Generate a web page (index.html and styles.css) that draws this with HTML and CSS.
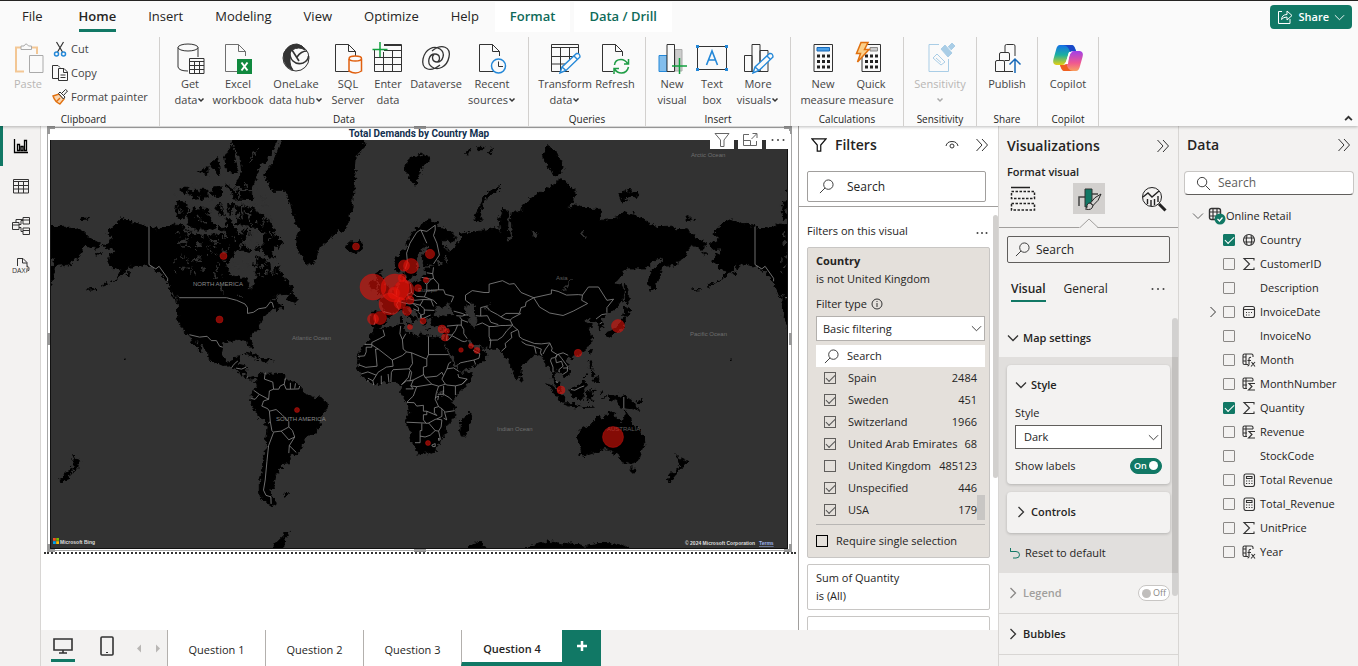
FILE: index.html
```html
<!DOCTYPE html>
<html lang="en">
<head>
<meta charset="utf-8">
<title>Online Retail report</title>
<link rel="stylesheet" href="styles.css">
</head>
<body>
<svg class="defs" aria-hidden="true">
  <symbol id="chev" viewBox="0 0 12 12"><path d="M1 3.5 6 8.5 11 3.5"/></symbol>
  <symbol id="caret" viewBox="0 0 8 8"><path d="M1.500 2.500 4 5 6.500 2.500" stroke-width="1.500"/></symbol>
  <symbol id="dbl" viewBox="0 0 14 14"><path d="M1.500 1 7 7 1.500 13M7 1 12.500 7 7 13"/></symbol>
  <symbol id="find" viewBox="0 0 16 16"><circle cx="10" cy="6" r="5"/><path d="M6.400 9.600 1 15"/></symbol>
  <symbol id="findr" viewBox="0 0 16 16"><circle cx="6.500" cy="6.500" r="5"/><path d="M10 10 15 15"/></symbol>
  <symbol id="funnel" viewBox="0 0 18 16"><path d="M1 1H17L11 8V15H7V8Z"/></symbol>
  <symbol id="page" viewBox="0 0 32 32"><path d="M19 29.500H3.500V2.500H16.500L23.500 9.500V14M16.500 2.500V9.500H23.500"/></symbol>
  <symbol id="grid" viewBox="0 0 32 32"><path d="M2.500 8V29.500H29.500V2.500H12M12 8.500H29.500M12 3.500H29.500M2.500 15.500H29.500M2.500 22.500H29.500M11.500 10V29M20.500 9V29"/></symbol>
  <symbol id="pencil" viewBox="0 0 32 32"><path d="M11 31 13 25 27.500 11.500Q31 11 31 15L17 28.500ZM25 14 28.500 17.500M13 25 17 28.500" fill="#fafafa" stroke="#2488d8" stroke-width="1.400"/></symbol>
  <symbol id="calc" viewBox="0 0 32 32"><path d="M7 2.500H25.500V29.500H7Z"/><path d="M10 12.500H13V15.500H10ZM15 12.500H18V15.500H15ZM20 12.500H23V15.500H20ZM10 18H13V21H10ZM15 18H18V21H15ZM20 18H23V21H20ZM10 23.500H13V26.500H10ZM15 23.500H18V26.500H15ZM20 23.500H23V26.500H20Z" fill="#222" stroke="none"/></symbol>
  <symbol id="sigma" viewBox="0 0 14 14"><path d="M12 3.500V1.500H2L7.500 7 2 12.500H12V10.500"/></symbol>
  <symbol id="globe" viewBox="0 0 14 14"><circle cx="7" cy="7" r="5.500"/><path d="M5 2Q3.500 7 5 12M9 2Q10.500 7 9 12M2 5H12M2 9H12"/></symbol>
  <symbol id="date" viewBox="0 0 14 14"><rect x="1.500" y="1.500" width="11" height="11" rx="2"/><path d="M1.500 4.500H12.500M4 7.500H5M6.500 7.500H7.500M9 7.500H10M4 10H5M6.500 10H7.500"/></symbol>
  <symbol id="fx" viewBox="0 0 14 14"><path d="M6 11.500H2.500Q1 11.500 1 10V2.500Q1 1 2.500 1H9.500Q11 1 11 2.500V4M4 1V11M1 4H4M1 8H4"/><path d="M9 4.500Q7 4 7 6V11.500Q7 13 5.500 13M5.500 7.500H9M9.500 9 13 13.500M13 9 9 13.500"/></symbol>
  <symbol id="sumcol" viewBox="0 0 14 14"><path d="M5 11.500H2.500Q1 11.500 1 10V2.500Q1 1 2.500 1H9.500Q11 1 11 2.500V4M4 1V11M1 4H11M1 8H5"/><path d="M13 6.500H7L10 9.500 6.500 13H13"/></symbol>
  <symbol id="measure" viewBox="0 0 14 14"><rect x="2" y="1" width="10.500" height="12.500" rx="2"/><path d="M4.500 3.500H10V5.500H4.500ZM4 8H5.200M6.700 8H7.900M9.300 8H10.500M4 10.500H5.200M6.700 10.500H7.900M9.300 10.500H10.500"/></symbol>
</svg>

<header class="ribbon">
  <nav class="tabs">
    <a href="#file">File</a><a href="#home" class="on">Home</a><a href="#insert">Insert</a><a href="#modeling">Modeling</a><a href="#view">View</a><a href="#optimize">Optimize</a><a href="#help">Help</a><a href="#format" class="ctx">Format</a><a href="#drill" class="ctx">Data / Drill</a>
    <button class="share"><svg viewBox="0 0 16 16"><path d="M5 2.500H1.500V14.500H13V10M4.500 10.500Q5 5.500 10 5.500V2L15 6.500 10 11V8Q6.500 8 4.500 10.500Z"/></svg>Share<svg class="s12"><use href="#chev"/></svg></button>
  </nav>
  <div class="tools">
    <section class="group clip">
      <div class="btns">
        <button class="big w40 off"><svg viewBox="0 0 32 32"><path d="M12 29.500H4V5.500H9M19 5.500H25V12" stroke="#f3c795" stroke-width="2"/><path d="M9 7.500V4H12Q14 0 16.500 4H19.500V7.500ZM17.500 13.500H31V30.500H17.500Z" stroke="#aaa"/></svg>Paste</button>
        <div class="stack">
          <button><svg viewBox="0 0 16 16"><path d="M4.500 1 10.500 11M11.500 1 5.500 11" stroke-width="1.200"/><g stroke="#2488d8" stroke-width="1.500"><circle cx="4.500" cy="13" r="2"/><circle cx="11.500" cy="13" r="2"/></g></svg>Cut</button>
          <button><svg viewBox="0 0 16 16"><path d="M6 13.500H.5V.5H6L8 2.500M6.500 3.500H12L15.500 7V15.500H6.500ZM11.500 4V7.500H15M8.500 10H13.500M8.500 12.500H13.500"/></svg>Copy</button>
          <button><svg viewBox="0 0 16 16"><path d="M1 7 7 5 12 10 8 15Q3 13 1 7ZM5 12 8 9" fill="#fbd5ae" stroke="#e0700f" stroke-width="1.400"/><path d="M6.500 4.500 8 3 13 8 11.500 10ZM9.500 4.500 13.500.5 15.500 2 11.500 6.500" fill="#fafafa"/></svg>Format painter</button>
        </div>
      </div>
      <h2>Clipboard</h2>
    </section>
    <section class="group pad8">
      <div class="btns">
        <button class="big w44"><svg viewBox="0 0 32 32"><ellipse cx="14" cy="5.500" rx="10" ry="3.500"/><path d="M4 5.500V25Q5 29 14 29M24 5.500V15"/><path d="M15.500 16.500H30V31.500H15.500ZM15.500 19.500H30M15.500 23.500H30M15.500 27.500H30M20.500 19V31M25.500 19V31" fill="#fafafa"/></svg>Get<br>data<i><svg><use href="#caret"/></svg></i></button>
        <button class="big w52"><svg viewBox="0 0 32 32"><use href="#page" opacity=".7"/><path d="M15 17H30V32H15Z" fill="#10893e" stroke="none"/><path d="M19.500 20.500 25.500 28.500M25.500 20.500 19.500 28.500" stroke="#fff" stroke-width="2"/></svg>Excel<br>workbook</button>
        <button class="big w64"><svg viewBox="0 0 32 32"><circle cx="16" cy="16" r="13"/><path d="M4 11Q8 2 17 2Q23 3 25 8Q19 4 12 8L10 11V20Q10 24 13 28Q2 24 4 11Z" fill="#333"/><path d="M10 9Q9 15 13 19Q17 23 23 21Q28 19 28.500 14M12 8L19 19M27 9Q21 9 17 15" stroke-width="1.600"/></svg>OneLake<br>data hub<i><svg><use href="#caret"/></svg></i></button>
        <button class="big w40"><svg viewBox="0 0 32 32"><use href="#page"/><g stroke="#e0600f" fill="#fafafa" stroke-width="1.500"><path d="M17 17V29Q23.500 33 29.500 29V17"/><ellipse cx="23.300" cy="16.500" rx="6.200" ry="2.500"/></g></svg>SQL<br>Server</button>
        <button class="big w40"><svg viewBox="0 0 32 32"><use href="#grid"/><path d="M8 0V15M.5 7.500H15.500" stroke="#10a03e" stroke-width="1.500"/></svg>Enter<br>data</button>
        <button class="big w56"><svg viewBox="0 0 32 32"><path d="M20 23C10 31 1 27 3 17C5 7 14 3 20 7C26 11 23 20 17 20C12 20 11 14 15 12M12 9C22 1 31 5 29 15C27 25 18 29 12 25C6 21 9 12 15 12C20 12 21 18 17 20" stroke-width="1.300"/></svg>Dataverse</button>
        <button class="big w56"><svg viewBox="0 0 32 32"><use href="#page"/><circle cx="22.500" cy="24" r="7" fill="#fafafa" stroke="#2488d8" stroke-width="1.500"/><path d="M22.500 19.500V24.500H27"/></svg>Recent<br>sources<i><svg><use href="#caret"/></svg></i></button>
      </div>
      <h2>Data</h2>
    </section>
    <section class="group pad8">
      <div class="btns">
        <button class="big w56"><svg viewBox="0 0 32 32"><path d="M2.500 2.500H29.500V12M20 29.500H2.500V2.500M2.500 5.500H29.500M2.500 14.500H25M2.500 22H16M11.500 6V29M20.500 6V18"/><use href="#pencil"/></svg>Transform<br>data<i><svg><use href="#caret"/></svg></i></button>
        <button class="big w44"><svg viewBox="0 0 32 32"><use href="#page"/><path d="M14 16H31V32H14Z" fill="#fafafa" stroke="none"/><path d="M15.500 23Q16 17.500 22 17.500Q26 17.500 29 22M29.500 17V22H25M29.500 25Q28 31 22.500 31Q18 31 15.500 27M15 32V26.500H20" stroke="#1f9d45" stroke-width="1.500"/></svg>Refresh</button>
      </div>
      <h2>Queries</h2>
    </section>
    <section class="group pad6">
      <div class="btns">
        <button class="big w40"><svg viewBox="0 0 32 32"><path d="M3 13.500H11V29.500H3Z" fill="#83beec" stroke="#2488d8"/><path d="M19 7.500H26V29H19Z" fill="#ccc" stroke="#aaa"/><path d="M11 2.500H18.500V29.500H11Z" fill="#fafafa"/><path d="M23.500 16V32M16 24H31" stroke="#10a03e" stroke-width="1.500"/></svg>New<br>visual</button>
        <button class="big w40"><svg viewBox="0 0 32 32"><path d="M1.500 4.500H30.500V27.500H1.500Z"/><path d="M10.500 23 16 9 21.500 23M12.500 18H19.500" stroke="#2488d8" stroke-width="1.600"/><path d="M0 3H3V6H0ZM29 3H32V6H29ZM0 26H3V29H0ZM29 26H32V29H29Z" fill="#2488d8" stroke="none"/></svg>Text<br>box</button>
        <button class="big w52"><svg viewBox="0 0 32 32"><path d="M2.500 13.500H10V29.500H2.500ZM10 2.500H18V29.500H10ZM18 8.500H26V29.500H18Z"/><use href="#pencil"/></svg>More<br>visuals<i><svg><use href="#caret"/></svg></i></button>
      </div>
      <h2>Insert</h2>
    </section>
    <section class="group pad8">
      <div class="btns">
        <button class="big w48"><svg viewBox="0 0 32 32"><use href="#calc"/><path d="M10 5.500H22.500V9H10Z" fill="#4aa0e8" stroke="#1668b8"/></svg>New<br>measure</button>
        <button class="big w48"><svg viewBox="0 0 32 32"><use href="#calc"/><path d="M15 5.500H22.500V9H15Z" fill="#ccc" stroke="#888"/><path d="M6 .5H13L9.500 7.500H14L2.500 20 5.500 11.500H1.500Z" fill="#fbd08a" stroke="#e0700f" stroke-width="1.500"/></svg>Quick<br>measure</button>
      </div>
      <h2>Calculations</h2>
    </section>
    <section class="group pad4">
      <div class="btns">
        <button class="big w64 off"><svg viewBox="0 0 32 32" class="blue"><path d="M15 2.500H5V29.500H24.500V17"/><path d="M9 16 13 12 21 20 17 23ZM12 16 17 20.500" /><path d="M17 7 21 3 28 11 24 15ZM24 5 28 1 31 4 27 8" fill="#a9cde6"/></svg>Sensitivity<br><i><svg><use href="#caret"/></svg></i></button>
      </div>
      <h2>Sensitivity</h2>
    </section>
    <section class="group pad4">
      <div class="btns">
        <button class="big w52"><svg viewBox="0 0 32 32"><path d="M22 29.500H4.500V20Q4.500 18.500 6 18.500H12Q13.500 18.500 13.500 20V29M8.500 18V12Q8.500 10.500 10 10.500H17Q18.500 10.500 18.500 12V18M14 10V4Q14 2.500 15.500 2.500H22.500Q24 2.500 24 4V14M13.500 18.500H18.500"/><path d="M24 31V17M18.500 22.500 24 17 29.500 22.500" stroke="#1668b8" stroke-width="1.500"/></svg>Publish</button>
      </div>
      <h2>Share</h2>
    </section>
    <section class="group pad4">
      <div class="btns">
        <button class="big w52"><svg viewBox="0 0 32 32"><defs><linearGradient id="ga" x1="0" y1="0" x2="0" y2="1"><stop offset="0" stop-color="#1470e8"/><stop offset=".5" stop-color="#1bb0a0"/><stop offset="1" stop-color="#e8d010"/></linearGradient><linearGradient id="gb" x1="0" y1="0" x2="0" y2="1"><stop offset="0" stop-color="#a040e8"/><stop offset=".6" stop-color="#f05890"/><stop offset="1" stop-color="#f8a060"/></linearGradient></defs><g stroke="none"><path d="M8 3H20Q22 3 23 6L24 9H20Q17 9 16 13L14 20Q13 23 10 23H4Q0 22 1.500 17L4 8Q5 3 8 3Z" fill="url(#ga)"/><path d="M11 3H20Q22 3 24 9H20L18 10Q16 3 11 3Z" fill="#1a48c8"/><path d="M24 29H12Q10 29 9 26L8 23H12Q15 23 16 19L18 12Q19 9 22 9H28Q32 10 30.500 15L28 24Q27 29 24 29Z" fill="url(#gb)"/><path d="M8 23H12L14.500 22Q16 29 21 29H12Q10 29 8 23Z" fill="#f06020"/><path d="M17 10H20Q17 11 16 22H12Q14 22 17 10Z" fill="#fff"/></g></svg>Copilot</button>
      </div>
      <h2>Copilot</h2>
    </section>
    <button class="collapse" aria-label="Collapse ribbon"><svg viewBox="0 0 8 8"><path d="M1 5.500 4 2.500 7 5.500" stroke-width="1.600"/></svg></button>
  </div>
</header>

<main>
  <nav class="rail">
    <a href="#report" class="on" aria-label="Report view"><svg viewBox="0 0 18 18"><path d="M2.500 2V15.500H16M5.500 7.500H7.500V13.500H5.500ZM9 9.500H11V13.500H9ZM12.500 3.500H14.500V13.500H12.500Z"/></svg></a>
    <a href="#table" aria-label="Table view"><svg viewBox="0 0 18 18"><path d="M1.500 2.500H16.500V16H1.500ZM1.500 4.500H16.500M1.500 8.500H16.500M1.500 12H16.500M6.500 4V16M11.500 4V16"/></svg></a>
    <a href="#model" aria-label="Model view"><svg viewBox="0 0 18 18"><path d="M.5 5.500H7V12.500H.5ZM.5 8H7M11 .5H17.500V7H11ZM11 3H17.500M11 11H17.500V17.500H11ZM11 13.500H17.500M7 7.500H9V3.500H11M7 10.500H9V14.500H11M4 5V2.500H11"/></svg></a>
    <a href="#dax" aria-label="DAX query view"><svg viewBox="0 0 18 18"><path d="M5.500 9V1.500H11L15 5.500V14Q15 16 12.500 16M10.500 2V6H15M15 9Q18 10 16.500 14"/><text x="0" y="15.500">DAX</text></svg></a>
  </nav>

  <div class="work">
    <div class="canvas">
      <section class="visual">
        <h1>Total Demands by Country Map</h1>
        <svg id="map" viewBox="50 140 738 409" role="img" aria-label="Bubble map of demand by country">
          <defs><filter id="rough" x="0" y="0" width="100%" height="100%"><feTurbulence type="fractalNoise" baseFrequency=".22" numOctaves="3" seed="4"/><feDisplacementMap in="SourceGraphic" scale="7" xChannelSelector="R" yChannelSelector="G"/></filter></defs>
          <rect x="50" y="140" width="738" height="409" fill="#323232"/>
          <g id="land" filter="url(#rough)"></g>
          <g id="borders"></g>
          <g class="place">
            <text x="193" y="286">NORTH AMERICA</text><text x="276" y="421">SOUTH AMERICA</text><text x="607" y="431" class="dark">AUSTRALIA</text><text x="556" y="280" class="dark">Asia</text><text x="418" y="292" class="dark">Europe</text>
            <g class="sea"><text x="292" y="340">Atlantic Ocean</text><text x="691" y="157">Arctic Ocean</text><text x="690" y="336">Pacific Ocean</text><text x="497" y="431">Indian Ocean</text></g>
          </g>
          <g id="bubbles"></g>
          <path d="M50.500 140V548.500H787.500V140" fill="none" stroke="#111"/>
          <g stroke="none"><path d="M53 538h2.800v2.800h-2.800z" fill="#f25022"/><path d="M56.200 538h2.800v2.800h-2.800z" fill="#7fba00"/><path d="M53 541.200h2.800v2.800h-2.800z" fill="#00a4ef"/><path d="M56.200 541.200h2.800v2.800h-2.800z" fill="#ffb900"/></g>
          <g class="credit"><text x="60" y="543.500">Microsoft Bing</text><text x="685" y="545">© 2024 Microsoft Corporation</text><text x="759" y="545" class="terms">Terms</text></g>
        </svg>
        <span class="h tl"></span><span class="h tc"></span><span class="h tr"></span><span class="h ml"></span><span class="h mr"></span><span class="h bl"></span><span class="h bc"></span><span class="h br"></span>
        <div class="vtools">
          <button aria-label="Filters on visual"><svg viewBox="0 0 16 16"><path d="M1 1.500H15L10 8V14.500H6.500V8Z"/></svg></button>
          <button aria-label="Focus mode"><svg viewBox="0 0 16 16"><path d="M7 2.500H1.500V13.500H14.500V9M1.500 8.500H8.500V13M9.500 7 14.500 2M10.500 1.500H15V6"/></svg></button>
          <button aria-label="More options"><svg viewBox="0 0 16 16" class="dots"><circle cx="2.500" cy="8" r="1"/><circle cx="8" cy="8" r="1"/><circle cx="13.500" cy="8" r="1"/></svg></button>
        </div>
      </section>
    </div>

    <aside class="filters">
      <header><svg class="fn"><use href="#funnel"/></svg><h2>Filters</h2><button aria-label="Show filter pane"><svg viewBox="0 0 14 14"><path d="M1 8Q2 3.500 7 3.500T13 8"/><circle cx="7" cy="8" r="2"/></svg></button><button aria-label="Collapse filters"><svg><use href="#dbl"/></svg></button></header>
      <label class="box"><svg><use href="#find"/></svg><input type="text" placeholder="Search" aria-label="Search filters"></label>
      <div class="flist">
        <div class="fhead"><span>Filters on this visual</span><button aria-label="More"><svg viewBox="0 0 16 16" class="dots"><circle cx="3.500" cy="8" r="1"/><circle cx="8" cy="8" r="1"/><circle cx="12.500" cy="8" r="1"/></svg></button></div>
        <div class="card sel">
          <b>Country</b><span>is not United Kingdom</span>
          <label for="ftype" class="ft">Filter type <svg viewBox="0 0 12 12"><circle cx="6" cy="6" r="5"/><path d="M6 5V9M6 3V4"/></svg></label>
          <span class="pick"><select id="ftype"><option>Basic filtering</option></select><svg><use href="#chev"/></svg></span>
          <label class="in"><svg><use href="#find"/></svg><input type="text" placeholder="Search" aria-label="Search countries"></label>
          <ul>
            <li><label><input type="checkbox" checked>Spain</label><span>2484</span></li>
            <li><label><input type="checkbox" checked>Sweden</label><span>451</span></li>
            <li><label><input type="checkbox" checked>Switzerland</label><span>1966</span></li>
            <li><label><input type="checkbox" checked>United Arab Emirates</label><span>68</span></li>
            <li><label><input type="checkbox">United Kingdom</label><span>485123</span></li>
            <li><label><input type="checkbox" checked>Unspecified</label><span>446</span></li>
            <li><label><input type="checkbox" checked>USA</label><span>179</span></li>
          </ul>
          <label class="single"><input type="checkbox">Require single selection</label>
        </div>
        <div class="card"><span>Sum of Quantity</span><span>is (All)</span></div>
        <div class="card next"></div>
      </div>
    </aside>

    <footer>
      <button class="dev on" aria-label="Desktop layout"><svg viewBox="0 0 20 16"><path d="M1 1H19V12H1ZM10 12V15M6 15H14" stroke-width="1.600"/></svg></button>
      <button class="dev" aria-label="Mobile layout"><svg viewBox="0 0 14 20" class="ph"><rect x="1" y="1" width="12" height="18" rx="1" stroke-width="1.600"/><path d="M6 16.500H8"/></svg></button>
      <button class="arr" aria-label="Previous page"><svg viewBox="0 0 6 8"><path d="M5 0V8L1 4Z"/></svg></button>
      <button class="arr" aria-label="Next page"><svg viewBox="0 0 6 8"><path d="M1 0V8L5 4Z"/></svg></button>
      <a href="#q1">Question 1</a><a href="#q2">Question 2</a><a href="#q3">Question 3</a><a href="#q4" class="on">Question 4</a>
      <button class="add" aria-label="New page"><svg viewBox="0 0 12 12"><path d="M6 1V11M1 6H11" stroke="#fff" stroke-width="2.500"/></svg></button>
    </footer>
  </div>

  <aside class="viz">
    <header><h2>Visualizations</h2><button aria-label="Collapse visualizations"><svg><use href="#dbl"/></svg></button></header>
    <h3>Format visual</h3>
    <div class="modes">
      <button aria-label="Build visual"><svg viewBox="0 0 26 26"><path d="M1 1.500H20" stroke-width="1.500"/><path d="M1.500 5.500H24.500V12.500H1.500ZM1.500 17.500H24.500V24H1.500Z" stroke-dasharray="2.500 1.500" stroke-width="1.500"/></svg></button>
      <button class="on" aria-label="Format visual"><svg viewBox="0 0 26 26"><path d="M3 20V11H9M16 8H22" stroke="#444" stroke-width="1.500"/><path d="M9 3H16V21H9Z" fill="#117865" stroke="#333"/><path d="M25 8Q18 11 14.500 17L17 19.500Q23 15 25 8ZM14.500 17Q10.500 17 11 21Q11 22 9.500 23Q16 25 17 19.500Z" fill="#d2d0ce"/></svg></button>
      <button aria-label="Analytics"><svg viewBox="0 0 26 26"><circle cx="11" cy="11" r="9.500"/><path d="M2 11 7 7 11 11 18 5M6.500 18V13M10 20V14M13.500 19V13M17 16V10" stroke-width="1.400"/><path d="M18 18 24.500 24.500" stroke-width="3"/></svg></button>
    </div>
    <svg class="notch" viewBox="0 0 18 10"><path d="M0 9.500 9 1 18 9.500" fill="#f3f2f1" stroke="#a19f9d"/></svg>
    <label class="box"><svg><use href="#find"/></svg><input type="text" placeholder="Search" aria-label="Search format options"></label>
    <div class="subtabs"><a href="#visual" class="on">Visual</a><a href="#general">General</a><button aria-label="More options"><svg viewBox="0 0 16 16" class="dots"><circle cx="2.500" cy="8" r="1"/><circle cx="8" cy="8" r="1"/><circle cx="13.500" cy="8" r="1"/></svg></button></div>
    <div class="opts">
      <button class="sec first"><svg><use href="#chev"/></svg>Map settings</button>
      <div class="well">
        <div class="panel">
          <button class="sec2"><svg><use href="#chev"/></svg>Style</button>
          <label for="style">Style</label>
          <span class="pick"><select id="style"><option>Dark</option></select><svg><use href="#chev"/></svg></span>
          <div class="row"><label for="labels">Show labels</label><span class="switch on"><input type="checkbox" id="labels" checked><span>On</span></span></div>
        </div>
        <div class="panel ctl"><button class="sec2"><svg class="r"><use href="#chev"/></svg>Controls</button></div>
        <button class="reset"><svg viewBox="0 0 12 12"><path d="M1.500 1V4.500H5M1.500 4.500H7Q10.500 4.500 10.500 7.800T7 11H4"/></svg>Reset to default</button>
      </div>
      <div class="line dim"><button class="sec"><svg class="r"><use href="#chev"/></svg>Legend</button><span class="switch"><input type="checkbox" aria-label="Legend"><span>Off</span></span></div>
      <div class="line"><button class="sec"><svg class="r"><use href="#chev"/></svg>Bubbles</button></div>
    </div>
  </aside>

  <aside class="data">
    <header><h2>Data</h2><button aria-label="Collapse data"><svg><use href="#dbl"/></svg></button></header>
    <label class="box"><svg><use href="#findr"/></svg><input type="text" placeholder="Search" aria-label="Search fields"></label>
    <button class="tbl"><svg class="s12"><use href="#chev"/></svg><svg class="tb" viewBox="0 0 18 18"><rect x="1.500" y="1.500" width="11" height="11" rx="2" stroke-width="1.400"/><path d="M5 1.500V12.500M9 1.500V12.500M1.500 5H12.500M1.500 9H12.500" stroke-width="1.200"/><circle cx="12" cy="12" r="5.500" fill="#117865" stroke="none"/><path d="M9.500 12 11.500 14 14.500 10.500" stroke="#fff" stroke-width="1.200"/></svg>Online Retail</button>
    <ul>
      <li><label><input type="checkbox" checked><svg><use href="#globe"/></svg>Country</label></li>
      <li><label><input type="checkbox"><svg><use href="#sigma"/></svg>CustomerID</label></li>
      <li><label><input type="checkbox"><svg></svg>Description</label></li>
      <li><button aria-label="Expand InvoiceDate"><svg class="r s12"><use href="#chev"/></svg></button><label><input type="checkbox"><svg><use href="#date"/></svg>InvoiceDate</label></li>
      <li><label><input type="checkbox"><svg></svg>InvoiceNo</label></li>
      <li><label><input type="checkbox"><svg><use href="#fx"/></svg>Month</label></li>
      <li><label><input type="checkbox"><svg><use href="#sumcol"/></svg>MonthNumber</label></li>
      <li><label><input type="checkbox" checked><svg><use href="#sigma"/></svg>Quantity</label></li>
      <li><label><input type="checkbox"><svg><use href="#sumcol"/></svg>Revenue</label></li>
      <li><label><input type="checkbox"><svg></svg>StockCode</label></li>
      <li><label><input type="checkbox"><svg><use href="#measure"/></svg>Total Revenue</label></li>
      <li><label><input type="checkbox"><svg><use href="#measure"/></svg>Total_Revenue</label></li>
      <li><label><input type="checkbox"><svg><use href="#sigma"/></svg>UnitPrice</label></li>
      <li><label><input type="checkbox"><svg><use href="#fx"/></svg>Year</label></li>
    </ul>
  </aside>
</main>
<script src="map.js"></script>
</body>
</html>
```
FILE: styles.css
```css
* { box-sizing: border-box; }
body { margin: 0; height: 100vh; display: flex; flex-direction: column; overflow: hidden; font: 12px/16px "Open Sans", "Noto Sans", sans-serif; color: #252423; background: #fff; }
button, input, select { font: inherit; color: inherit; margin: 0; }
button { border: 0; padding: 0; background: none; }
h1, h2, h3, ul { margin: 0; padding: 0; font-weight: 400; list-style: none; }
a { color: inherit; text-decoration: none; }
svg { fill: none; stroke: #333; flex: none; overflow: visible; }
.defs { position: absolute; width: 0; height: 0; }
.s12 { width: 12px; height: 12px; }
.r { transform: rotate(-90deg); }
.dots { fill: #444; stroke: none; }

.ribbon { background: #fafafa; border-top: 1px solid #252423; box-shadow: 0 1px 3px #0004; position: relative; z-index: 2; }
.tabs { display: flex; align-items: center; height: 32px; font-size: 13px; padding: 0 6px 0 12px; }
.tabs a { padding: 0 10px; margin-right: 12px; line-height: 28px; height: 30px; }
.tabs a.on { font-weight: 600; padding: 0; margin: 0 22px 0 14px; border-bottom: 3px solid #117865; }
.tabs a.ctx { background: #fff; color: #0f6b5a; font-weight: 600; padding: 0 15px; margin: 0 4px 0 0; }
.tabs a:nth-child(7) { margin-right: 6px; }
.share { margin-left: auto; display: flex; align-items: center; gap: 5px; background: #117865; color: #fff; border-radius: 4px; height: 24px; padding: 0 7px; font-size: 11px; font-weight: 600; }
.share svg { stroke: #fff; width: 16px; height: 16px; }
.share .s12 { width: 11px; height: 11px; }
.tools { display: flex; padding: 4px 0 0; height: 93px; }
.group { display: flex; flex-direction: column; justify-content: space-between; border-right: 1px solid #d2d0ce; font-size: 11px; }
.group h2 { font-size: 10px; line-height: 13px; text-align: center; }
.btns { display: flex; align-items: flex-start; }
.pad4 { padding: 0 4px; }
.pad6 { padding: 0 6px; }
.pad8 { padding: 0 8px; }
.clip { width: 160px; padding-left: 8px; }
.big { display: block; text-align: center; padding-top: 5px; white-space: nowrap; color: #444; }
.big > svg { display: block; margin: 0 auto 2px; width: 32px; height: 32px; }
.big i svg { width: 8px; height: 8px; }
.off { color: #b8b6b4; }
.off i svg { stroke: #aaa; }
.big > svg.blue { stroke: #a9cde6; }
.w40 { width: 40px; } .w44 { width: 44px; } .w48 { width: 48px; } .w52 { width: 52px; } .w56 { width: 56px; } .w64 { width: 64px; }
.stack { display: flex; flex-direction: column; margin-left: 4px; color: #444; }
.stack button { display: flex; align-items: center; gap: 3px; height: 24px; white-space: nowrap; }
.stack svg { width: 16px; height: 16px; }
.collapse { margin: auto 5px 3px auto; }
.collapse svg { display: block; width: 9px; height: 9px; }

main { flex: 1; min-height: 0; display: flex; }
.rail { width: 41px; background: #f3f2f1; border-right: 1px solid #d8d6d4; }
.rail a { display: flex; height: 40px; align-items: center; justify-content: center; border-left: 3px solid transparent; padding-right: 1px; }
.rail a.on { border-color: #117865; }
.rail .on svg { stroke: #000; stroke-width: 1.3; }
.rail svg { width: 18px; height: 18px; }
.rail text { font-size: 7px; fill: #333; stroke: #f3f2f1; stroke-width: 2px; paint-order: stroke; }
.work { flex: 1; min-width: 0; display: grid; grid-template-columns: 1fr 200px; grid-template-rows: 1fr 36px; background: #fff; }
.canvas { padding: 0 2px 0 3px; min-height: 0; overflow: hidden; }
.visual { position: relative; padding: 1px 8px 3px 6px; }
.canvas::after { content: ""; display: block; border-top: 2px dotted #333; }
.visual::before { content: ""; position: absolute; inset: 1px 4px 1px 3px; border: 1px solid #a6a6a6; }
.visual h1 { font: bold 10px/13px Roboto, sans-serif; text-align: center; color: #12304f; }
#map { display: block; width: 100%; height: auto; overflow: hidden; stroke: none; }
#borders { stroke: #8a8a8a; stroke-width: .8; fill: none; }
#bubbles circle { fill: #f1140a; fill-opacity: .55; stroke: #d01010; stroke-opacity: .6; stroke-width: .7; }
.place { font-family: "Liberation Sans", sans-serif; font-size: 6px; fill: #8a8a8a; }
.sea { fill: #6f6f6f; }
.dark { fill: #5c5c5c; }
.credit { font: bold 5px "Liberation Sans", sans-serif; fill: #ddd; }
.terms { fill: #9db4f0; text-decoration: underline; }
.h { position: absolute; background: #999; }
.tl, .tr, .bl, .br { width: 8px; height: 8px; background: none; border: 0 solid #999; }
.tl { left: 3px; top: 0; border-width: 3px 0 0 3px; } .tr { right: 4px; top: 0; border-width: 3px 3px 0 0; }
.bl { left: 3px; bottom: 0; border-width: 0 0 3px 3px; } .br { right: 4px; bottom: 0; border-width: 0 3px 3px 0; }
.tc, .bc { left: 50%; width: 12px; height: 3px; margin-left: -6px; } .tc { top: 0; } .bc { bottom: 0; }
.ml, .mr { top: 50%; margin-top: -6px; width: 3px; height: 12px; } .ml { left: 3px; } .mr { right: 4px; }
.vtools { position: absolute; right: 6px; top: 5px; display: flex; gap: 4px; }
.vtools button { width: 24px; height: 18px; background: #fff; display: grid; place-items: center; }
.vtools svg { width: 16px; height: 16px; stroke: #666; }
.vtools .dots { stroke: none; }

aside header { display: flex; align-items: center; }
aside header h2 { flex: 1; font-size: 14px; font-weight: 600; line-height: 20px; }
aside header button svg { display: block; width: 14px; height: 14px; }
.box { display: flex; align-items: center; background: #fff; border: 1px solid #a19f9d; border-radius: 2px; }
.box svg, .in svg { width: 15px; height: 15px; }
.box input, .in input { flex: 1; min-width: 0; border: 0; background: none; padding: 0; outline: 0; }
input::placeholder { color: inherit; opacity: 1; }
input[type=checkbox] { appearance: none; flex: none; display: grid; place-items: center; width: 12px; height: 12px; border: 1px solid #605e5c; }
input[type=checkbox]:checked::after { content: ""; width: 8px; height: 4px; border: solid #555; border-width: 0 0 1px 1px; transform: rotate(-45deg) translate(1px, -1px); }
.pick { position: relative; display: flex; }
.pick select { appearance: none; width: 100%; height: 25px; background: #fff; border: 1px solid #b3b0ad; border-radius: 0; padding: 0 6px; outline: 0; }
.pick svg { position: absolute; right: 3px; top: 7px; width: 11px; height: 11px; }

.filters { display: flex; flex-direction: column; min-height: 0; overflow: hidden; border-left: 1px solid #a19f9d; font-size: 11px; }
.filters header { padding: 9px 9px 0 12px; gap: 8px; }
.filters header button + button { margin-left: 8px; }
.fn { width: 16px; height: 14px; stroke: #111; stroke-width: 1.4; }
.filters .box { height: 31px; margin: 16px 12px 4px 8px; padding-left: 11px; gap: 13px; font-size: 12px; }
.flist { flex: 1; min-height: 0; overflow: hidden; position: relative; border-top: 1px solid #a19f9d; padding: 14px 8px 0; }
.flist::after { content: ""; position: absolute; right: 0; top: 8px; width: 5px; height: 263px; border-radius: 3px; background: #d2d0ce; }
.fhead { display: flex; justify-content: space-between; height: 26px; padding-top: 2px; }
.fhead svg { width: 16px; height: 16px; }
.card { display: flex; flex-direction: column; border: 1px solid #c8c6c4; border-radius: 2px; padding: 4px 4px 4px 8px; line-height: 18px; margin-bottom: 6px; }
.next { height: 46px; }
.sel { background: #e4e0db; }
.ft { display: flex; align-items: center; gap: 4px; margin: 7px 0 3px; }
.ft svg { width: 12px; height: 12px; }
.in { display: flex; align-items: center; gap: 8px; height: 22px; margin-top: 4px; background: #fff; padding-left: 8px; }
.card ul { position: relative; border-bottom: 1px solid #b8b6b4; padding: 0 8px 3px; }
.card ul::after { content: ""; position: absolute; right: 0; bottom: 4px; width: 8px; height: 25px; background: #c8c6c4; }
.card li { display: flex; justify-content: space-between; align-items: center; height: 22px; white-space: nowrap; }
.card li label { display: flex; align-items: center; gap: 12px; }
.single { display: flex; align-items: center; gap: 8px; padding: 7px 0 3px; }
.single input[type=checkbox] { border-color: #000; }

footer { grid-column: 1 / -1; display: flex; background: #f3f2f1; font-size: 11px; }
footer a { width: 98px; display: grid; place-items: center; background: #fff; border-left: 1px solid #b3b0ad; padding-top: 3px; }
footer a.on { width: 101px; font-weight: 600; border-bottom: 4px solid #117865; padding-top: 6px; }
.dev { width: 44px; display: grid; place-items: center; padding-bottom: 4px; }
.dev svg { width: 20px; height: 16px; }
.dev.on { position: relative; }
.dev.on::after { content: ""; position: absolute; left: 10px; right: 10px; bottom: 4px; height: 3px; background: #117865; }
.dev .ph { width: 14px; height: 20px; }
.arr { width: 19px; display: grid; place-items: center; }
.arr svg { width: 6px; height: 9px; fill: #b8b6b4; stroke: none; }
.add { width: 39px; background: #117865; }
.add svg { width: 12px; height: 12px; }

.viz, .data { background: #f3f2f1; border-left: 1px solid #d8d6d4; display: flex; flex-direction: column; }
.viz { width: 180px; }
.viz header { padding: 10px 8px 0; }
.viz h3 { font-weight: 600; font-size: 11px; padding: 8px 8px 3px; }
.modes { display: flex; justify-content: space-between; padding: 0 8px 4px; }
.modes button { width: 32px; height: 31px; display: grid; place-items: center; }
.modes .on { background: #d2d0ce; }
.modes svg { width: 26px; height: 26px; stroke: #222; }
.notch { width: 18px; height: 10px; margin: 0 auto; }
.viz .box { position: relative; margin: 8px 8px 0; height: 27px; padding-left: 7px; gap: 6px; background: #f3f2f1; border-color: #605e5c; }
.viz .box::before { content: ""; position: absolute; left: -9px; right: -9px; top: -10px; border-top: 1px solid #a19f9d; clip-path: polygon(0 0, 45% 0, 45% 100%, 55% 100%, 55% 0, 100% 0, 100% 100%, 0 100%); }
.subtabs { display: flex; padding: 15px 12px 0; gap: 18px; line-height: 22px; }
.subtabs a.on { font-weight: 600; border-bottom: 2px solid #117865; }
.subtabs button { margin-left: auto; height: 22px; }
.subtabs svg { display: block; width: 16px; height: 16px; }
.opts { flex: 1; min-height: 0; position: relative; margin-top: 16px; font-size: 11px; }
.opts::after { content: ""; position: absolute; right: 0; top: 0; width: 6px; height: 278px; border-radius: 3px; background: #0002; }
.sec, .sec2, .reset { display: flex; align-items: center; gap: 4px; }
.sec, .sec2 { font-weight: 600; }
.sec { padding-left: 8px; height: 39px; }
.sec svg, .sec2 svg, .reset svg { width: 12px; height: 12px; }
.sec svg, .sec2 svg { stroke-width: 1.3; }
.well { background: #e1dfdd; padding: 8px; height: 216px; }
.panel { background: #f3f2f1; border-radius: 4px; box-shadow: 0 1px 3px #0003; padding: 10px 8px 0; height: 119px; display: flex; flex-direction: column; }
.sec2 { height: 20px; }
.panel label { line-height: 20px; margin-top: 8px; }
.panel .pick { margin-top: 2px; }
.panel select { border-color: #605e5c; padding-left: 8px; height: 24px; }
.panel .row { display: flex; justify-content: space-between; align-items: center; height: 33px; }
.panel .row label { margin: 0; }
.ctl { height: 41px; margin-top: 8px; }
.reset { padding: 12px 2px 0; }
.reset svg { stroke: #117865; }
.switch { position: relative; display: flex; align-items: center; width: 32px; height: 16px; border: 1px solid #c8c6c4; border-radius: 8px; padding: 0 3px; font-size: 9px; line-height: 12px; justify-content: space-between; color: #8a8886; background: #fff; }
.switch input[type=checkbox] { width: 9px; height: 9px; border: 0; border-radius: 5px; background: #c0bebc; }
.switch input[type=checkbox]::after { display: none; }
.switch.on { background: #117865; border-color: #117865; color: #fff; flex-direction: row-reverse; font-weight: 600; }
.switch.on input[type=checkbox] { background: #fff; }
.line { display: flex; align-items: center; justify-content: space-between; padding-right: 8px; border-bottom: 1px solid #d8d6d4; }
.line .sec { height: 40px; }
.dim { color: #a19f9d; }
.line.dim svg { stroke: #8a8886; }

.data { width: 180px; padding: 0 4px 0 5px; }
.data header { padding: 9px 3px 0; }
.data .box { margin-top: 16px; height: 24px; padding-left: 11px; gap: 7px; border-radius: 4px; border-color: #c8c6c4; border-bottom-color: #605e5c; color: #605e5c; }
.tbl { display: flex; align-items: center; gap: 4px; height: 24px; margin: 9px 0 0 8px; font-size: 11px; }
.tbl .s12 { stroke: #666; }
.tb { width: 18px; height: 18px; margin-right: -4px; }
.data li { display: flex; align-items: center; height: 24px; padding-left: 39px; position: relative; }
.data li button { position: absolute; left: 23px; display: flex; }
.data label:not(.box) { display: flex; align-items: center; font-size: 11px; }
.data li svg:not(.s12) { width: 14px; height: 14px; margin: 0 4px 0 7px; stroke-width: 1.1; }
.data li input[type=checkbox] { border-color: #8a8886; border-radius: 1px; }
.data li input[type=checkbox]:checked { background: #117865; border-color: #117865; }
.data li input[type=checkbox]:checked::after { border-color: #fff; }
```
FILE: map.js
```js
// Coastlines and borders as "lon,lat lon,lat ..." drawn in Mercator.
const land = [
"-168,65.6 -164,66.5 -162,67 -166,68.3 -163,69.5 -157,71.3 -150,70.5 -141,69.7 -135,69 -129,70 -125,70 -121,69.8 -115,68.3 -108,68 -102,67.8 -96,68.2 -95,71.5 -92,71 -90,69 -86,68 -85,69.5 -82,69 -81.5,67.5 -86,66.3 -87,64.5 -91,63.5 -94,61 -94.5,58.8 -92.5,57 -88,56.5 -82.5,55.2 -82,53 -79.5,51.5 -79,54 -76.7,56.5 -78.5,59 -77.5,62.5 -73.5,62 -70,61 -69.5,59 -67.5,58.3 -65.5,59.8 -64.5,60.3 -62,57.5 -60,55.5 -57,53.5 -55.7,52 -59,50.3 -66,50 -70,47 -65,49 -64.5,46.5 -61,45.5 -65.5,43.5 -66.5,45 -70,43.7 -70.7,42 -74,40.6 -76,37 -75.6,35.2 -79,33.5 -81.3,31 -80,27 -80.5,25.2 -82,27 -83,29.5 -85.5,29.8 -89.5,30 -91,29.2 -94.5,29.4 -97.3,27.5 -97.7,22.5 -95.5,18.7 -94,18 -91,18.7 -90.3,21 -87,21.4 -87.5,18.5 -88.5,16 -83.5,15 -83.7,11 -81.5,9 -79.5,9.5 -77.3,8.5 -78.5,8 -80.5,7.4 -83,8.3 -85.7,10 -87.5,13 -92,14.5 -94.5,16.2 -97,15.9 -102,18 -105.5,20 -105.5,22.5 -109,26 -112.5,29.5 -114.8,31.7 -113,29 -110,24.5 -109.5,23 -112,25 -115,28 -116,30.5 -117.3,33 -120.6,34.5 -122.4,37.5 -124.3,40.4 -124,44 -124.5,48.3 -122.5,48 -123,49.2 -127,51 -130,54.5 -133.5,57.5 -137,58.7 -140,59.8 -144,60.1 -148,60.5 -152,59.2 -151,61.2 -154,59 -158,56.5 -164,54.7 -160,56 -157.5,58.6 -162,59 -165.5,61 -164.5,63 -161,63.8 -161,64.6 -166,64.5",
"-73,78.2 -68,76 -60,76 -58,75 -55,72 -54,70 -51,69 -53.5,67 -52,64 -49,61.5 -44,60 -42.5,61.5 -40,65 -36,66 -32,68 -25,69 -22,71 -20,74 -19,77 -18,80 -12,81.5 -20,82.5 -30,83 -60,82.5 -65,80.5 -67,79.5",
"-90,76.5 -80,76.2 -77,78 -75,79 -68,80.5 -62,82.5 -80,83 -92,81.5 -87,80 -86,78.5",
"-95,78.5 -88,78.3 -90,80 -92,81.2 -96,80", "-96,76.8 -90,76 -80,75.7 -80,74.6 -91,74.7 -92,76",
"-90,73.5 -85,73.7 -80,73.6 -77,72.6 -72,71.5 -68,70 -67,68.5 -62,66.5 -64,65 -66,65.8 -68,63 -65.5,62 -71,62.8 -74,64.5 -78,64.5 -73,66 -73,68 -77,69.5 -82,69.8 -89,70.2 -89,71.5",
"-117,70 -114,69 -105,69 -101,69.5 -105,71 -105,73 -110,73 -115,73.3 -118,71.5", "-125,72 -123,71.3 -120,71.6 -117,73.2 -120,74.3 -124,74.2",
"-117,76 -106,76 -106,75 -113,74.5 -117,75.2", "-102,73 -97,71.6 -97,73.7 -101,73.8", "-95,73.8 -93,72 -90,73.8", "-103,76.3 -98,76.5 -98,75 -104,75.3", "-104,79 -99,78 -100,80 -104,79.5", "-123,76 -118,75.5 -118,76.6", "-112,78.5 -106,78 -106,79", "-87,64 -81,64 -84,66", "-100,70 -96,69 -98,68.8",
"-59,48 -56,51.5 -55,49.5 -53,48 -54,46.7", "-128,50.5 -124,49 -123.5,48.4 -126,49", "-85,22 -82,23.2 -77,21.5 -74.5,20.2 -77.500,19.9 -78,20.8 -82,22.5", "-74,19.8 -71,19.8 -68.5,18.6 -71,17.9 -74,18.4", "-78.3,18.4 -76.3,18.1 -77,17.8", "-67,18.5 -65.6,18.3 -67,17.9", "-155.8,20 -155,19.5 -155.7,19",
"-24,65.5 -22,66.3 -16,66.4 -13.7,65 -18,63.5 -22.5,64", "-5.5,50.1 -3,51.5 -5,51.8 -4.500,53 -3,54 -5,55 -6,57 -5,58.6 -3,58.6 -4,57.7 -2,57.6 -3,56 -1,54.6 0.3,53 1.6,52.6 1.2,51.2 -2,50.6", "-10,52 -9.5,54 -8,55.2 -6,54.5 -6.3,52.2",
"11,79 14,80 22,80.4 26,80 21,78.8 17,76.7 14,77.5", "52,71 53,72 56,73.8 60,75.6 68,76.8 67,76.2 59,74.8 55.500,72.5 57,70.8", "96,79.2 92,80 96,81.2 102,80.2 105,79 103,78.2 99,78", "138,75.5 145,76 150,75.2 143,74.8 140,74.2", "178.500,71.500 183,71.3 179,70.9", "47,80.5 50,80.9 49,80.3", "53,81 58,81 56,80.600", "60,80.500 63,80.9 62,80.2", "142,54.3 143.5,52 143,49.5 144.5,49 142.8,46.5 142,48", "49,69.3 50,68.9 48.5,68.7",
"-9,43 -1.8,43.4 -1.2,46 -4.5,48.4 -1.5,48.7 -1.5,49.7 1.5,50.5 4,51.8 5,53.3 8.5,53.7 8.2,57 10.5,57.6 10,55 11,54 14,54 18.5,54.7 21,55.3 21.3,57.3 24,57.2 23.5,59.2 28,59.6 29.5,60 25,60.2 22.5,60.2 21.4,61.5 21.5,63 25.3,65 22.5,65.8 21,64.5 17.5,62.2 17.2,60.7 18.7,59.9 16.5,57.5 14.3,55.5 12.8,55.6 11.2,59 10.5,59.2 8,58 5.5,59 5,62 10,64 13,66.5 16,68.7 20,70 25.5,71 31,70.4 30,69.7 36,69.2 41,67.5 40,66.3 33,66.7 35,64.4 38,64 40,65 40.5,64.6 42,66.4 44,66 44,68.5 46,68 53,68.7 60,68.8 64.5,69.5 68,68.3 67,71 69,73 72.5,72.8 72,69 73.8,68 71,66.5 73,66.3 75,68 74,71 75,72.8 80,72.3 81,73.6 87,75 95,76.1 104,77.7 108,76.7 113,75.6 110,74 106,73 113,73.7 123,73 128,73 127,71 131,71 138,71.5 140,72.6 150,71.6 160,69.7 170,69.8 172,69 178,69.3 183,67.5 190,66 187.5,64.4 181,65.5 179,64.6 177.5,62.5 170,60 163.5,59.8 163,57.8 162,56 160,53.2 156.7,51 155.6,55 157,58 163,61 164,62.4 160,61.8 155,59.3 151,59.3 143,59.3 135.5,54.7 141,53 140.3,48.5 135.5,44 131,43 129.5,41 127.5,39.5 129.3,36 126.5,34.5 126.5,37 125,39 121.5,39 122,40.8 118,39.1 119,37.3 122.3,37 119.5,35 121.8,32 121.5,29 119,25.5 114.5,22.3 110,20.8 108,21.6 106,19 109,14 109,11.5 105.5,9 105,10.3 102.5,12 101,13.4 99.8,12 99.5,9.3 103,4.5 104,1.3 101.3,3 100.3,6 98.4,8 98.7,11 97.6,16 94.5,16 94,19 91.5,22.7 87,21.5 85,19.8 82,16.7 80.2,15 80,12 79,10 77.5,8 76,11 73,17 72.7,21 70,20.8 69,22.5 67,24.8 61.5,25.1 57.3,25.7 56.5,27 52,27.7 50,30 48,30 48.5,28 50.2,26 51.4,25 54,24.2 56.3,26.2 57,24 59.8,22.4 57.7,19 55,17 52,15.7 45,12.8 43.3,12.7 42.5,16.5 39,21.5 35,28 34.9,29.4 34.3,27.9 32.5,29.9 34.2,31.3 36,36 36,36.8 30.5,36.6 27.5,37 26.3,39.5 29,41 33,42 36,41.5 41.5,41.5 38,44.5 37.5,46 39,47.2 35,46.3 33.5,44.5 33,46 30.7,46.3 28.5,44 28,42 29,41.2 26.3,40.7 23,40.5 24,38 22.8,36.5 21,38.3 19.5,41 19,42.2 14,45.2 12.3,45.3 13.5,43.5 16,41.5 18.5,40 16.5,39.8 16,38 14,40.7 11,42.5 9,44.4 6,43 3.2,43.2 3.2,41.8 0,39.5 -0.7,37.7 -2,36.7 -5.5,36 -9,37 -9.5,38.7",
"-6,35.8 -2,35 3,36.8 10,37.3 11,34 15,32.3 20,31 20,32.8 25,31.7 32,31.2 32.5,29.9 34,27 37,21 38.5,18 43,12 43.5,11.3 51,11.8 50,8 47,4 42,-1 39,-6 40.7,-11 40.5,-15 35,-20 35.5,-23.5 32.8,-26 32,-29 28,-33 22,-34 18.5,-34.3 18,-32 15,-27 14,-22 11.8,-17 13.7,-11 12.2,-6 9,-1 9.7,4 8,4.5 5,6 2,6.3 -4,5.2 -7.5,4.4 -13,8.5 -15,11 -17.3,14.7 -16.2,19 -17,21 -15,25 -13,27.8 -9.8,30 -9.7,32",
"-77.3,8.5 -75.5,10.7 -71.8,12.3 -71.5,10.8 -68,11 -62,10.6 -60,8.5 -54,5.8 -51,4 -50,0 -44,-2.7 -40,-3 -35.3,-5.3 -35,-9 -39,-13.5 -39.5,-19 -42,-22.8 -47,-24.7 -48.7,-28 -52,-33 -54.5,-34.8 -58,-34.2 -57,-36.5 -58,-38.3 -62,-39 -62.5,-41 -65,-41 -64,-42.7 -67.5,-46 -66,-48 -69,-50.5 -68.5,-52.5 -65.3,-54.8 -68,-55.6 -72,-54 -75.5,-51 -75.5,-47 -73.5,-42 -73.5,-38 -71.5,-32 -70.3,-20 -71.5,-17.5 -76,-14 -79.5,-8 -81.3,-4.5 -80,-2.5 -80.5,0 -78.5,2 -77.3,4 -77.7,7",
"114,-22 113.5,-26 115.7,-32 115.2,-34.3 118,-35 124,-33.5 129,-31.6 133,-32 135.5,-34.8 138,-33 138.5,-35.6 140,-38 144,-38.7 146.5,-39 150,-37.3 151.5,-33 153.5,-28.5 153,-25 149,-20.5 146,-18.8 145.3,-15 142.6,-10.8 141.5,-14 140.8,-17.5 139,-17.3 135.5,-15 136.8,-12.2 132.5,-11.3 130,-13.5 129,-15 126,-14 122.2,-18 119,-20",
"144.7,-40.8 148.3,-41 147.500,-43.3 146,-43.5", "172.7,-34.5 175,-36.5 178.4,-37.8 177,-39.6 175.3,-41.5 174,-39.5 174.8,-38", "173,-40.8 174.2,-41.8 171,-44.5 169,-46.6 166.5,-46 170,-43", "44,-17 49.5,-12.2 50.3,-16 47,-25 44.5,-25 43.5,-22", "80,9.7 81.8,7.5 80.6,6 79.8,7.5",
"95.3,5.5 98,4.5 103,0 106,-3 105.7,-5.8 102,-4 98.7,1.5", "105.3,-6.7 110.8,-6.5 114.5,-7.8 114,-8.6 108,-7.8", "109,1.5 111.5,2.7 115,5 117,7 119,5.2 117.5,1 116,-4 111.5,-3.2", "119,0.8 125,1.5 120.5,0.3 123,-0.8 121.5,-2 122.5,-5 120.4,-3 119.5,-5.5 118.9,-3", "116,-8.4 120,-8.3 123,-8.5 119,-8.9", "127.5,1.5 128.5,0.5 127.8,-0.6", "127,-3.2 130.5,-3 129,-3.5",
"131,-0.8 134,-0.9 135,-3.3 138,-1.6 144.5,-3.9 147.8,-6 147.2,-7 150.500,-10.5 147,-9.6 143,-9.2 138,-8.2 137.8,-5.3 133,-4", "149,-5.8 152,-4.3 151,-6", "120.5,18.5 122.2,18.4 121.5,15.5 124,12.8 120.6,14", "122,7 124,8.5 126.3,8.8 126,6.4 124,6.500", "122,11.7 124,11 123,9.3", "117.3,8.5 119.5,11 118.7,9.8", "120.3,23.3 121.8,25.2 121,22.2", "108.7,19.6 111,19.9 109.5,18.3",
"130.2,33.2 132,34 136,35.5 139.8,38.5 141.3,41.4 142,39.5 140.7,35.7 136,33.6 131.3,31.2 130.2,31.5", "140.3,41.6 141.8,45.3 145.3,43.3 143,42", "12.5,38 15.5,38.1 15,36.8", "8.3,41 9.7,41 9.5,39 8.4,39", "24,35.5 26,35.2 24,35", "32.5,35 34.3,35.5 33,34.6",
"-69,-69 -66,-66.5 -60,-64 -57,-63.3 -61,-65.500 -62,-69", "44,-69 48,-67.6 51,-66.5 56,-66.1 59,-67.6 60,-69", "70,-69 85,-67 90,-66.6 98,-65.8 101,-66 105,-66.7 110,-66.2 118,-67 125,-66.4 134,-66.3 142,-67 150,-69", "-75,-52 -70,-55 -73,-54", "-61,-51.5 -58,-51.8 -60,-52.2",
"-178,51.8 -172,52.5 -174,52", "-170,53 -165,54.5 -168,53.4", "-154.5,57.5 -152,58 -153,57", "-173,63.6 -169,63.2 -172,63.3"
];
const water = ["47,45 51,47 53,45 51,44 53.500,40 54,37 50,37.5 49,41", "59,45 61,46.500 60,44", "104,51.6 109,54.5 110,55.6 108,53", "-124,66 -120,67 -118,65.5", "-116,61.3 -110,62.8 -112,61.6", "-111,59 -106,59.500 -108,58.8", "-103,58 -101,56 -102,58", "-99,53.5 -97,50.6 -97.500,53", "32,0.5 34,0 33,-2.500", "30,61.5 32.5,61 31,60", "35,62.500 36,61", "116,68.5 118,67.5 117,69", "87,69 90,68 88,67", "-105,67 -99,65.8 -103,66.3", "-98,64.500 -94,63.9 -97,63.8", "-113,66 -109,65.5 -112,65.3", "-92,67.500 -90,66.500", "-76,60 -73,59.5", "-120,69 -116,68.500 -118,68", "-76,57.500 -73,56.500", "-88,50 -86,49", "-71,66 -68,67.3", "-84,72.800 -82,70.8 -81,72", "-80,80 -76,81 -82,79.500", "-112,71.2 -107,70.5", "-86,72.500 -85,71 -85.500,73"];
// Small lakes scattered over northern Canada.
let seed = 7;
const rnd = () => (seed = (seed * 16807) % 2147483647) / 2147483647;
for (let i = 0; i < 170; i++) {
  const lon = -126 + rnd() * 60, lat = 57 + rnd() * 20;
  water.push(`${lon},${lat} ${lon + 1 - rnd() * 2},${lat + rnd() * .7} ${lon + rnd()},${lat - rnd() * .5}`);
}
const lines = [
"-141,69.7 -141,60.3 -137,59 -135,59.8 -130,56 -130,55", "-123,49 -95,49 -89,48 -84,46.5 -82.5,45 -82.5,42.5 -79,43 -76,44.5 -71.5,45 -69,47.3 -67.8,47 -67,45", "-117,32.5 -111,31.3 -106.5,31.7 -104,29.5 -101,29.5 -99,26.5 -97.2,26",
"-92,14.6 -91,16 -89.2,17.8 -88.3,18.4", "-89.3,14.4 -86,13.8 -83.3,15", "-85.7,11 -83.7,11", "-82.9,8.3 -82.6,9.5",
"-72,11.8 -72.5,8 -67.5,6.2 -67,2 -69.5,1 -70,-4 -73,-5 -74,-8 -70.5,-9.500 -69.5,-11 -65.5,-10 -62,-13 -60,-15 -58,-17 -58,-20 -55.8,-22 -54.5,-25.5 -57.7,-30 -58,-33.8", "-67,2 -64,2 -63,4 -60.7,5 -60,8.5", "-57,5.8 -57,2 -59.5,2 -60.7,5", "-57,2 -52,2.2 -51.5,4", "-54,5.5 -54.5,2.5", "-80.3,-3.5 -78,-4 -75.5,-1 -78.8,1.3", "-75.5,-1 -70,-4", "-69.5,-11 -69,-17 -70.3,-18", "-69,-17 -68,-22 -67,-23 -70,-30 -71,-38 -72,-46 -73,-50 -71.500,-52 -68.600,-52.500 -68.5,-55", "-67,-22.800 -62.5,-22.3 -58,-20", "-62.5,-22.3 -58,-27 -54.5,-25.5", "-57.7,-30 -53.5,-33.5",
"-2,35 -1,32 -4,30.500 -8.7,28.5 -8.7,27.5 -13,27.5", "-8.7,27.5 -8.7,26 -12,26 -12,23.5 -13,21.3 -17,21", "-8.7,27.3 -4.8,25 1.5,20.5 3.5,19 9.5,21.500 12,23.5 10,25 9.5,30 8,33 8.500,36.8", "9.5,30 11.5,33", "-4.8,25 -6.5,25 -5.500,15.5 -11,15 -12.2,14.8 -16.4,16.3", "12,23.5 15,23 24,19.5 24,20 25,22 25,31.5", "25,22 37,22", "3.5,19 4,15.5 0,15 -5,12 -6,10.3 -11,12.2 -15,11", "15,23 15.5,17 13.5,14 4,13.5 3,12 2.7,6.3", "13.5,14 15,12 14,7 16,7.500 22,10.500 22,15 24,15.5 24,19.5", "14,7 12,7 9,4.7", "14,12.8 13,9 9,4.7", "1,11 1.5,6.2", "-3,10 -3,5", "-6,10.3 -8,7 -7.5,4.4", "-11,8.500 -8,7", "-10.500,7 -11.500,7", "16,7.5 14.500,4 16,2.2 11.5,2.2", "14.500,4 18,3.5 27,5 23,9 22,11", "18,3.5 16,-2 13,-4.8 12.2,-5.8 16.5,-6 18,-8 22,-7.5 22,-11 24,-11 24,-13 22,-13 22,-16 23.5,-17.8 12,-17.3", "27,5 31,3.8 29.7,0 29,-4 31,-8.3 28.5,-9 28.5,-12 30,-13.5 24,-11", "31,3.8 35,5 36,4.5 41,4 41,-1.5", "35,5 33,8 34,10 36,14 37,17 38.5,18", "23,9 30,9.7 33,12 34,10", "36,14 40,14.500 43,12.500", "41,4 45,5 48,8 43,9 42.5,11", "45,5 47.8,8", "34,0 34,-1 37.5,-3 39,-4.6", "30.5,-1 34,-1", "34,4 34,0", "29,-3 31,-2 30.500,-4.500", "31,-8.3 33,-9.5 35,-11.5 40.5,-10.7", "33,-9.5 33,-14 30,-15.5 33,-16 32.5,-20 31,-22.3 32,-26.5", "34.500,-11.500 35.800,-16 34,-15", "25,-17.8 29,-15.7 30,-15.5", "23.5,-18 25.2,-17.8 29,-22 31,-22.3", "21,-18 21,-22 20,-22 20,-28.5 17,-28.5", "20,-25 23,-25.5 26,-24.5 29,-22", "27,-29.7 29,-29 29,-30.5 27.500,-30.500 27,-29.7", "31,-26 32,-27 31,-27.300 31,-26",
"11.2,59 12.5,61 12,63.500 14,66 18,68.5 20,69 24,68.7 29,70 29,69 28,67.800 30,66 31.500,63 28,60.5", "20.5,69 24,66", "28,59.5 27.500,57.5 28,56 31,54 31,52 24,51.6 24,54 22.8,54.4", "24,57.8 27.5,57.5", "21,56.3 26.500,55.7 28,56", "24,54 26.500,55.7", "31,52 34,52 35,50.3 40,49.5 38.5,47.2", "24,51.6 22.6,49.3 28,48 30,46.5", "22.6,49.3 18,49.500 15,51 14.3,54", "15,51 12.5,50.3 13.5,48.6 17,48 22,48.3 20,46 16,46.7 13.5,46.5 10,47 7,47.6 6,46.3 7.5,44", "7,47.6 8,49 6,49.5 2.5,51", "6,49.5 6,51.7 7,53.2", "-1.800,43.3 3,42.4", "-7,41.9 -6.5,39 -7.4,37.2", "20,46 22.5,44.5 22.5,42.3 20.5,41.8 21,40 26.3,41.800", "22.5,44 28.5,43.8", "16,46.500 19,45 19,43.5 16,44.500", "19,43 20.500,42 20,40", "22,48.3 26.500,48.2 28,45.5",
"41.5,41.5 45,41.3 47,41.8 48.5,41.8", "40,43.5 45,42.5 47,41.8", "43.5,41 45,39.5 48.5,38.5", "44.5,39.5 44.5,37.2 42.3,37.2 36,36.7", "42.3,37.2 41,34.500 39,32.3 36,32.5 35.7,29.5 37,30 39,32 45,29.2 46.500,29 48,29.5", "44.5,37.2 46,35 46,33 48,30.5", "36,34.500 36.500,34", "42.8,16.5 44,17.4 48,18.2 52,19 53,16.5", "52,19 55,20 55.500,22.500 51.5,24.3", "54,37.3 57,38.2 61,36.5 61,31.5 62,29.5 61.5,25.5", "61,36.5 64,36.5 68,37 71,37 75,37.2 71.5,34.5 69,31.500 66,29.8 61,29.7", "53,41.500 56,41.3 56,45 59,45.500 62,43.5 66,42 68,41 71,42.5 79,42.5 80,45 82.5,45.5 83,47.3 87.5,49", "56,41.3 60,41.500 62,38.500 66.5,37.4", "68,41 70.5,40 73.5,39.5 75,37.2", "73.5,39.5 75,40.5 80,42.5", "50,46.5 47,48 47,50 51,51.7 58,51 61,51 61,54 69,55.2 73,54 76,54.2 80,51 87.5,49 98,50.5 98,52 102,51.4 107,50 114,50.2 116.5,50 120,53 126,53 131,48 135,48.400 131,45 131,42.8", "87.5,49 91,45.2 97,42.7 105,41.6 111,43.5 119.500,46.7 116,48 116.5,50", "75,37 78.5,34.5 79,31.5 81,30.2 88,28 92,27.8 97,28.3 98.500,25.5 98,24 101.5,22 105,23 108,21.6", "68.3,23.8 71,26 70.5,28 74.5,31 74,33.5 78,35", "80.3,29 83,27.4 88,26.5", "88,26.5 89,22.5", "88.5,26.2 92,25 91.5,23 92.5,21.5", "97,28 94.5,25 93,22.3", "98,20 97.5,18.5 99,15 99,12", "98,20 100,20.3 101.5,22 100.5,20 101,17.5 104,18.3 105,15.5 102.5,13.500 102.8,12", "102,22.3 104,20 107.5,15.5 107.500,12.500 104.500,10.500", "105,14.400 107.500,14.500", "100.5,6.5 102,6", "109.7,1.8 112,1.4 115,3 117.5,4", "141,-2.6 141,-9.2", "124.500,40 128,42 130.7,42.3", "126.7,37.8 128.4,38.6"
];
const R = 606 / (2 * Math.PI);
function path(s, close) {
  return s.split(" ").map((p, i) => {
    const [lon, lat] = p.split(",").map(Number);
    const y = 392.6 - R * Math.log(Math.tan(Math.PI / 4 + lat * Math.PI / 360));
    return (i ? "L" : "M") + (386.4 + lon * 606 / 360).toFixed(1) + " " + y.toFixed(1);
  }).join("") + (close ? "Z" : "");
}
const draw = (list, close) => list.map(s => path(s, close)).join("");
// The world repeats every 606 units.
const copies = (d, attrs) => [-606, 0, 606].map(dx => `<path transform="translate(${dx} 0)" d="${d}" ${attrs}/>`).join("");
document.getElementById("land").innerHTML =
  copies(draw(land, true), 'fill="#000" stroke="#000" stroke-width="1"') +
  copies(draw(water, true), 'fill="#323232" stroke="#323232" stroke-width="1"');
document.getElementById("borders").innerHTML = copies(draw(lines, false), 'stroke-linejoin="round"');
const bubbles = [[223.5,256,3.5],[219.5,319.5,3.5],[356,246.5,3.5],[404,265.5,5.5],[411,266,7.5],[373,287,13],[395,288,14],[404,290,10],[402,278,4],[394,293,6],[390,304,11],[400,303,6],[410,300,4],[407,311,4.5],[373,319,5.5],[380,318,6.5],[410,327,2.5],[418,288,3.5],[430,254,4.7],[426,280,2.7],[423,321,3],[442,329,4],[445,337.5,3.5],[447,331,2.5],[618,326,6.5],[461,350,2.3],[471,346,2.5],[477,350.5,3],[578,353,3.7],[561,390,4],[613,437,10.5],[428,443,2.5],[297,410,2.5]];
document.getElementById("bubbles").innerHTML = bubbles.map(([x, y, r]) => `<circle cx="${x}" cy="${y}" r="${r}"/>`).join("");
```
